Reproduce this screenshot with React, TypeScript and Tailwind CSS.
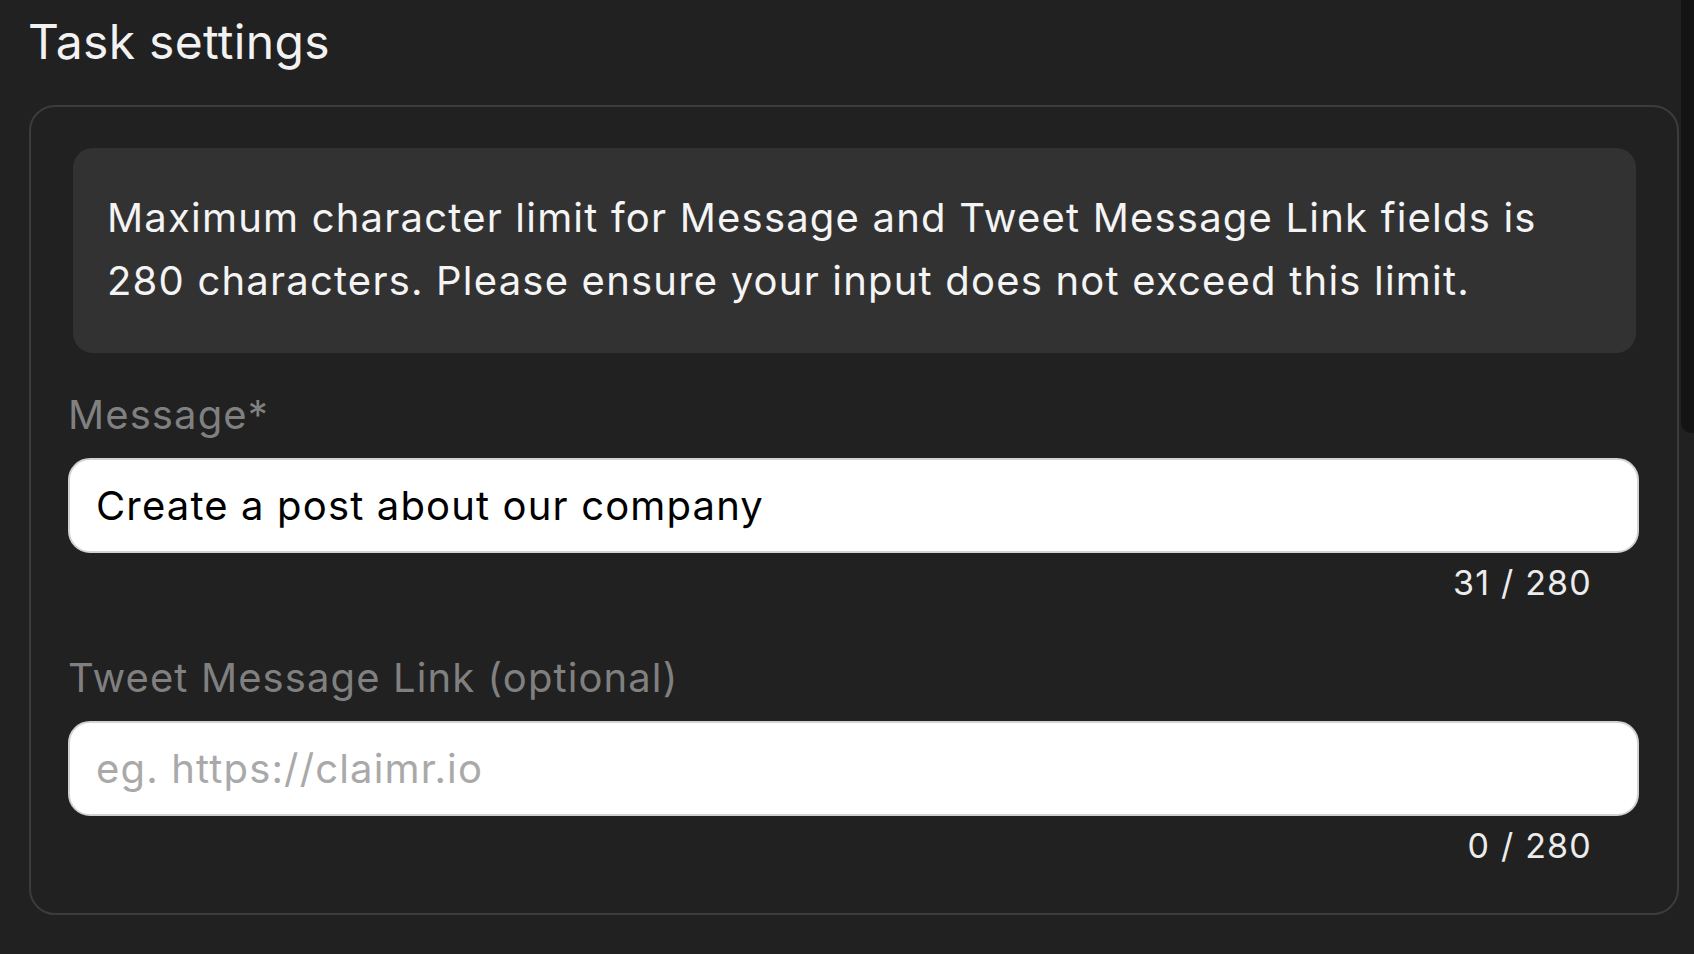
import { useState } from "react";

const LIMIT = 280;

function Field({
  label,
  value,
  placeholder,
  onChange,
}: {
  label: string;
  value: string;
  placeholder?: string;
  onChange: (v: string) => void;
}) {
  return (
    <div className="flex flex-col">
      <label className="text-[40px] leading-[48px] tracking-[1.1px] text-[#808080]">{label}</label>
      <input
        value={value}
        placeholder={placeholder}
        maxLength={LIMIT}
        onChange={(e) => onChange(e.target.value)}
        className="mt-[19px] h-[95px] w-full rounded-[22px] border-2 border-[#d2d2d2] bg-white px-[26px] text-[40px] leading-[48px] tracking-[1.15px] text-black placeholder:text-[#a9a9a9] outline-none"
      />
      <div className="mt-[10px] pr-[47px] text-right text-[34px] leading-[40px] tracking-[1.2px] text-[#ececec]">
        {value.length} / {LIMIT}
      </div>
    </div>
  );
}

export default function App() {
  const [message, setMessage] = useState("Create a post about our company");
  const [link, setLink] = useState("");

  return (
    <div
      className="flex h-[954px] w-full overflow-hidden bg-[#212121]"
      style={{ fontFamily: "Inter, 'Noto Sans', sans-serif" }}
    >
      <div className="flex-1 pl-[29px] pr-[2px]">
        <h2 className="-ml-[1px] pt-[13px] text-[48px] leading-[58px] font-normal tracking-[0.3px] text-[#f2f2f2]">
          Task settings
        </h2>

        <div className="mt-[34px] rounded-[26px] border-2 border-[#3c3c3c] pl-[37px] pr-[38px] pt-[41px] pb-[47px]">
          <div className="ml-[5px] mr-[3px] rounded-[20px] bg-[#323232] pl-[34px] pr-[50px] pt-[38px] pb-[41px] text-[40px] leading-[63px] tracking-[1.2px] text-[#f4f4f4]">
            Maximum character limit for Message and Tweet Message Link fields is 280
            characters. Please ensure your input does not exceed this limit.
          </div>

          <div className="mt-[38px] flex flex-col gap-[51px]">
            <Field label="Message*" value={message} onChange={setMessage} />
            <Field
              label="Tweet Message Link (optional)"
              value={link}
              placeholder="eg. https://claimr.io"
              onChange={setLink}
            />
          </div>
        </div>
      </div>

      <div className="w-[13px]">
        <div className="h-[433px] rounded-bl-[10px] bg-[#141414]" />
      </div>
    </div>
  );
}
